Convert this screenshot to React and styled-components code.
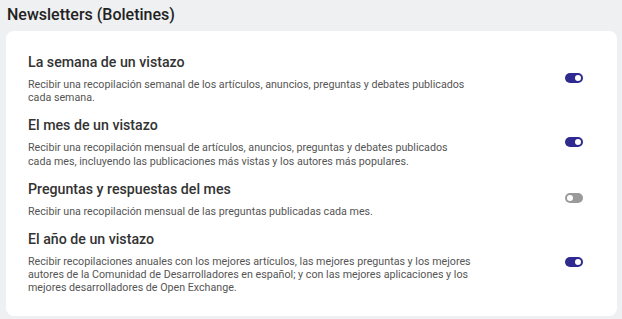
import React, { useState } from "react";
import styled, { createGlobalStyle } from "styled-components";

const GlobalStyle = createGlobalStyle`
  html, body {
    margin: 0;
    padding: 0;
    background: #eef0f2;
    font-family: Roboto, "Liberation Sans", sans-serif;
  }
`;

const Page = styled.div`
  padding: 4px 5px 6px 6px;
`;

const Heading = styled.h2`
  margin: 0 0 0 1px;
  font-size: 16px;
  font-weight: 500;
  line-height: 22px;
  color: #222;
`;

const Card = styled.section`
  margin-top: 5px;
  background: #fff;
  border-radius: 8px;
  padding: 21px 34px 21px 22px;
  display: flex;
  flex-direction: column;
  gap: 11px;
`;

const Row = styled.div`
  display: flex;
  align-items: center;
  justify-content: space-between;
`;

const Text = styled.div`
  max-width: 443px;
`;

const Title = styled.h3`
  margin: 0;
  font-size: 14.2px;
  font-weight: 500;
  line-height: 20px;
  color: #333;
`;

const Desc = styled.p`
  margin: 6px 0 0;
  font-size: 10.7px;
  line-height: 13.2px;
  color: #555;
`;

const Track = styled.button`
  width: 18px;
  height: 10px;
  padding: 0;
  border: none;
  border-radius: 5px;
  background: ${(p) => (p.$on ? "#2f2a8e" : "#9a9a9a")};
  position: relative;
  cursor: pointer;
  flex-shrink: 0;
`;

const Knob = styled.span`
  position: absolute;
  top: 2px;
  left: ${(p) => (p.$on ? "10px" : "2px")};
  width: 6px;
  height: 6px;
  border-radius: 50%;
  background: #fff;
`;

const Toggle = ({ on, onClick }) => (
  <Track $on={on} onClick={onClick} aria-pressed={on}>
    <Knob $on={on} />
  </Track>
);

const items = [
  {
    title: "La semana de un vistazo",
    desc: "Recibir una recopilación semanal de los artículos, anuncios, preguntas y debates publicados cada semana.",
    on: true,
  },
  {
    title: "El mes de un vistazo",
    desc: "Recibir una recopilación mensual de artículos, anuncios, preguntas y debates publicados cada mes, incluyendo las publicaciones más vistas y los autores más populares.",
    on: true,
  },
  {
    title: "Preguntas y respuestas del mes",
    desc: "Recibir una recopilación mensual de las preguntas publicadas cada mes.",
    on: false,
  },
  {
    title: "El año de un vistazo",
    desc: "Recibir recopilaciones anuales con los mejores artículos, las mejores preguntas y los mejores autores de la Comunidad de Desarrolladores en español; y con las mejores aplicaciones y los mejores desarrolladores de Open Exchange.",
    on: true,
  },
];

export default function App() {
  const [state, setState] = useState(items.map((i) => i.on));
  const flip = (k) => setState((s) => s.map((v, i) => (i === k ? !v : v)));

  return (
    <>
      <GlobalStyle />
      <Page>
        <Heading>Newsletters (Boletines)</Heading>
        <Card>
          {items.map((item, k) => (
            <Row key={item.title}>
              <Text>
                <Title>{item.title}</Title>
                <Desc>{item.desc}</Desc>
              </Text>
              <Toggle on={state[k]} onClick={() => flip(k)} />
            </Row>
          ))}
        </Card>
      </Page>
    </>
  );
}
